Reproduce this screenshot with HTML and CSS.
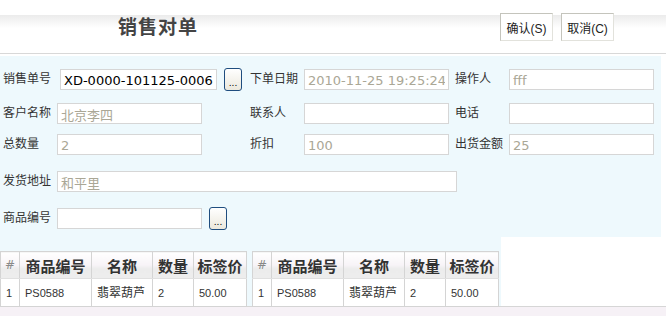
FILE: index.html
```html
<!DOCTYPE html>
<html lang="zh-CN">
<head>
  <meta charset="UTF-8" />
  <title>销售对单</title>
  <link rel="stylesheet" href="styles.css">
</head>
<body>
  <header class="topbar">
    <h1 class="title">销售对单</h1>
    <div class="actions">
      <button class="btn">确认(S)</button>
      <button class="btn">取消(C)</button>
    </div>
  </header>

  <div class="panel">
    <div class="row r1">
      <div class="field c1">
        <span class="lbl lbl-wide">销售单号</span>
        <input class="inp inp-wide dark" type="text" value="XD-0000-101125-0006" readonly />
        <button class="pick">...</button>
      </div>
      <div class="field c2">
        <span class="lbl">下单日期</span>
        <input class="inp" type="text" value="2010-11-25 19:25:24" readonly />
      </div>
      <div class="field c3">
        <span class="lbl">操作人</span>
        <input class="inp" type="text" value="fff" readonly />
      </div>
    </div>

    <div class="row r2">
      <div class="field c1">
        <span class="lbl">客户名称</span>
        <input class="inp" type="text" value="北京李四" readonly />
      </div>
      <div class="field c2">
        <span class="lbl">联系人</span>
        <input class="inp" type="text" value="" readonly />
      </div>
      <div class="field c3">
        <span class="lbl">电话</span>
        <input class="inp" type="text" value="" readonly />
      </div>
    </div>

    <div class="row r3">
      <div class="field c1">
        <span class="lbl">总数量</span>
        <input class="inp" type="text" value="2" readonly />
      </div>
      <div class="field c2">
        <span class="lbl">折扣</span>
        <input class="inp" type="text" value="100" readonly />
      </div>
      <div class="field c3">
        <span class="lbl">出货金额</span>
        <input class="inp" type="text" value="25" readonly />
      </div>
    </div>

    <div class="row r4">
      <div class="field">
        <span class="lbl">发货地址</span>
        <input class="inp inp-long" type="text" value="和平里" readonly />
      </div>
    </div>

    <div class="row r5">
      <div class="field">
        <span class="lbl">商品编号</span>
        <input class="inp" type="text" value="" />
        <button class="pick">...</button>
      </div>
    </div>
  </div>

  <div class="tables">
    <table class="grid">
      <thead>
        <tr><th class="num">#</th><th class="w-code">商品编号</th><th class="w-name">名称</th><th class="w-qty">数量</th><th class="w-price">标签价</th></tr>
      </thead>
      <tbody>
        <tr><td>1</td><td>PS0588</td><td class="cn">翡翠葫芦</td><td>2</td><td>50.00</td></tr>
      </tbody>
    </table>
    <table class="grid">
      <thead>
        <tr><th class="num">#</th><th class="w-code">商品编号</th><th class="w-name">名称</th><th class="w-qty">数量</th><th class="w-price">标签价</th></tr>
      </thead>
      <tbody>
        <tr><td>1</td><td>PS0588</td><td class="cn">翡翠葫芦</td><td>2</td><td>50.00</td></tr>
      </tbody>
    </table>
  </div>

  <footer class="bottom"></footer>
</body>
</html>
```

FILE: styles.css
```css
body {
  margin: 0;
  font-family: "Noto Sans CJK SC", sans-serif;
  font-size: 12px;
  color: #333;
  background: #fff;
}

.topbar {
  height: 53px;
  display: flex;
  align-items: flex-start;
  border-bottom: 1px solid #d8d8d8;
  background: linear-gradient(#fff 0, #fff 15px, #ebebeb 15px, #fff 28px);
}

.title {
  margin: 13px 0 0 118px;
  width: 382px;
  font-size: 19px;
  line-height: 26px;
  font-weight: bold;
  color: #444;
  letter-spacing: 1px;
}

.actions {
  display: flex;
  gap: 8px;
  margin-top: 13px;
}

.btn {
  height: 28px;
  padding: 0;
  width: 53px;
  font-family: "Liberation Sans", "Noto Sans CJK SC", sans-serif;
  font-size: 12px;
  color: #222;
  background: #fff;
  border: 1px solid #c4c4bc;
  border-right-color: #e2e2dc;
  border-bottom-color: #e2e2dc;
}

.panel {
  box-sizing: border-box;
  width: 661px;
  height: 181px;
  margin-top: 2px;
  padding-top: 13px;
  background: #eef9fd;
}

.row {
  display: flex;
  height: 21px;
}

.r2 { margin-top: 13px; }
.r3 { margin-top: 10px; }
.r4 { margin-top: 16px; }
.r5 { margin-top: 16px; }

.field {
  display: flex;
  align-items: flex-start;
  padding-left: 3px;
}

.c1 { width: 247px; }
.c2 { width: 205px; padding-left: 0; }
.c3 { width: 200px; padding-left: 0; }

.lbl {
  width: 54px;
  line-height: 17px;
  white-space: nowrap;
  color: #333;
}

.lbl-wide { width: 57px; }

.inp {
  box-sizing: border-box;
  width: 145px;
  height: 21px;
  margin: 0;
  padding: 2px 3px 0;
  border: 1px solid #d6d6d6;
  background: #fff;
  font-family: "DejaVu Sans", "Noto Sans CJK SC", sans-serif;
  font-size: 13px;
  color: #aaa796;
  outline: none;
}

.inp-wide { width: 157px; }
.inp-long { width: 400px; }
.dark { color: #000; }

.pick {
  box-sizing: border-box;
  width: 18px;
  height: 23px;
  margin: -1px 0 0 7px;
  padding: 6px 0 0;
  border: 1px solid #1f4d7f;
  border-radius: 3px;
  background: linear-gradient(#fff, #ebe8dc);
  font-family: "DejaVu Sans", sans-serif;
  font-size: 9px;
  line-height: 10px;
  color: #000;
}

.tables {
  box-sizing: border-box;
  width: 501px;
  height: 69px;
  display: flex;
  gap: 5px;
  padding-top: 14px;
  background: #eef9fd;
}

.grid {
  border-collapse: collapse;
  border: 1px solid #cfcfcf;
  background: #fff;
  table-layout: fixed;
  width: 247px;
}

.grid th {
  height: 26px;
  padding: 0;
  font-size: 15px;
  font-weight: bold;
  color: #333;
  border: 1px solid #d4d4d4;
  border-bottom-color: #e0e0e0;
  background: linear-gradient(#fff 0, #f7f3f7 50%, #ececec 62%, #ededed 100%);
  white-space: nowrap;
}

.grid th.num {
  width: 18px;
  font-family: "DejaVu Sans", sans-serif;
  font-size: 12px;
  font-weight: normal;
  color: #888;
}

.w-code { width: 71px; }
.w-name { width: 60px; }
.w-qty { width: 40px; }

.grid td {
  height: 24px;
  padding: 0 0 0 5px;
  font-family: "Liberation Sans", "Noto Sans CJK SC", sans-serif;
  font-size: 11px;
  color: #333;
  border: 1px solid #d4d4d4;
  white-space: nowrap;
}

.grid td.cn {
  font-family: "Noto Sans CJK SC", sans-serif;
  font-size: 12px;
  padding-bottom: 3px;
}

.bottom {
  height: 12px;
  border-top: 1px solid #d6d6d6;
  background: #f6f1f6;
}
```
